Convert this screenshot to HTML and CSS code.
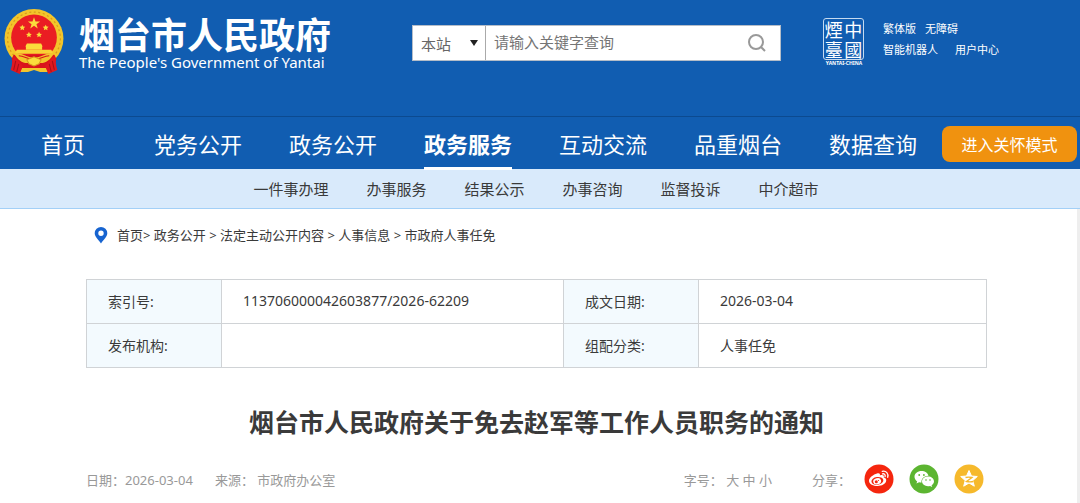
FILE: index.html
```html
<!DOCTYPE html>
<html lang="zh-CN">
<head>
<meta charset="utf-8">
<meta name="viewport" content="width=device-width, initial-scale=1">
<title>烟台市人民政府</title>
<link rel="stylesheet" href="styles.css">
</head>
<body>
<header class="header">
  <a class="brand" href="#">
    <svg class="emblem" viewBox="0 0 58 64" aria-hidden="true">
      <ellipse cx="29" cy="29" rx="29" ry="29" fill="#f3c52b"/>
      <circle cx="29" cy="29" r="26" fill="none" stroke="#d99a1c" stroke-width="1.200" stroke-dasharray="2 2.500"/>
      <circle cx="29" cy="28" r="22.500" fill="#ea1d23"/>
      <path d="M29 8l1.500 4.200h4.500l-3.600 2.700 1.300 4.300-3.700-2.600-3.700 2.600 1.300-4.300-3.600-2.700h4.500z" fill="#fbdc3c"/>
      <g fill="#fbdc3c">
        <path id="star" d="M17.500 15.500l.9 1.800 2 .2-1.500 1.400.4 2-1.800-1-1.800 1 .4-2-1.500-1.400 2-.2z"/>
        <use href="#star" x="23"/>
        <use href="#star" x="6.500" y="7"/>
        <use href="#star" x="16.500" y="7"/>
      </g>
      <path d="M22 34h14l1.500 3H20.500zM21 37h16v3H21z" fill="#fbdc3c"/>
      <path d="M12 40h34l2 4H10z" fill="#f9d235"/>
      <path d="M9 45h40l2 4-3 12-8 1-3-4H21l-3 4-8-1-3-12z" fill="#d9141c"/>
      <path d="M9 43c8 0 14 5 20 5s12-5 20-5c-4 8-10 11-15 10l-5-3-5 3c-5 1-11-2-15-10z" fill="#f3c52b"/>
      <path d="M14 46c5 0 10 4 15 4s10-4 15-4" fill="none" stroke="#d9141c"/>
      <path d="M22 50l7-3 7 3-2 4-5 2-5-2z" fill="#fbdc3c" stroke="#d99a1c"/>
      <path d="M17 58h24l2 4h-8l-6-2-6 2h-8z" fill="#f3c52b"/>
      <path d="M9 46c-2 5-1 9-3 14l9 4 3-8zM49 46c2 5 1 9 3 14l-9 4-3-8z" fill="#e0181f"/>
      <path d="M11 51l-2 9M14 54l-2 8M47 51l2 9M44 54l2 8" stroke="#a60f18"/>
    </svg>
    <span class="brand-text">
      <strong class="brand-name">烟台市人民政府</strong>
      <span class="brand-en" lang="en">The People's Government of Yantai</span>
    </span>
  </a>
  <form class="search" role="search">
    <select class="search-scope" aria-label="搜索范围"><option>本站</option></select>
    <input class="search-input" type="text" placeholder="请输入关键字查询" aria-label="关键字">
    <button class="search-button" type="button" aria-label="搜索">
      <svg viewBox="0 0 20 20" aria-hidden="true"><circle cx="9" cy="9" r="7"/><path d="M14 14l4 4"/></svg>
    </button>
  </form>
  <div class="seal">
    <div class="seal-box" lang="zh-TW"><span>煙</span><span>中</span><span>臺</span><span>國</span></div>
    <svg class="seal-caption" viewBox="0 0 38 6"><text x="19" y="5" text-anchor="middle">YANTAI-CHINA</text></svg>
  </div>
  <div class="tools">
    <div class="tools-row"><a href="#">繁体版</a><a href="#">无障碍</a></div>
    <div class="tools-row tools-row-wide"><a href="#">智能机器人</a><a href="#">用户中心</a></div>
  </div>
</header>
<nav class="nav" aria-label="主导航">
  <ul class="nav-list">
    <li><a href="#">首页</a></li>
    <li><a href="#">党务公开</a></li>
    <li><a href="#">政务公开</a></li>
    <li><a class="active" href="#">政务服务</a></li>
    <li><a href="#">互动交流</a></li>
    <li><a href="#">品重烟台</a></li>
    <li><a href="#">数据查询</a></li>
  </ul>
  <button class="care" type="button">进入关怀模式</button>
</nav>
<nav class="subnav" aria-label="政务服务">
  <a href="#">一件事办理</a>
  <a href="#">办事服务</a>
  <a href="#">结果公示</a>
  <a href="#">办事咨询</a>
  <a href="#">监督投诉</a>
  <a href="#">中介超市</a>
</nav>
<main class="main">
  <div class="crumbs">
    <svg class="pin" viewBox="0 0 14 18" aria-hidden="true"><path fill-rule="evenodd" d="M7 1a6.300 6.300 0 0 0-6.300 6.300C.7 11 4.500 13.500 7 17.500c2.500-4 6.300-6.500 6.300-10.200A6.300 6.300 0 0 0 7 1zm0 3.600a2.700 2.700 0 1 1 0 5.400 2.700 2.700 0 0 1 0-5.400z"/></svg>
    <span><a href="#">首页</a>&gt; <a href="#">政务公开</a> &gt; <a href="#">法定主动公开内容</a> &gt; <a href="#">人事信息</a> &gt; <a href="#">市政府人事任免</a></span>
  </div>
  <table class="info">
    <colgroup><col class="col-label"><col class="col-wide"><col class="col-label"><col></colgroup>
    <tr><th scope="row">索引号:</th><td>113706000042603877/2026-62209</td><th scope="row">成文日期:</th><td>2026-03-04</td></tr>
    <tr><th scope="row">发布机构:</th><td></td><th scope="row">组配分类:</th><td>人事任免</td></tr>
  </table>
  <h1 class="title">烟台市人民政府关于免去赵军等工作人员职务的通知</h1>
  <div class="meta">
    <span class="meta-date">日期：2026-03-04</span>
    <span class="meta-source">来源： 市政府办公室</span>
    <span class="meta-size">字号： <a href="#">大</a> <a href="#">中</a> <a href="#">小</a></span>
    <span class="meta-share">分享：</span>
    <div class="share">
      <a href="#" aria-label="微博">
        <svg viewBox="0 0 30 30"><circle cx="15" cy="15" r="14.500" fill="#f5260e"/><path fill="#fff" d="M13 9.500c2-.8 3.400 0 2.900 2 2.600-1 4.600-.2 3.900 2 2 .6 2.700 1.800 2.400 3.300-.6 3.200-4.300 5.200-8.500 5.200-4.500 0-8.700-2-8.700-5.300 0-3 4.500-6.200 8-7.200z"/><ellipse cx="13.400" cy="17" rx="6" ry="3.900" fill="#f5260e" transform="rotate(-8 13 17)"/><ellipse cx="13.100" cy="17.200" rx="4" ry="3.100" fill="#fff" transform="rotate(-15 13 17)"/><circle cx="12.300" cy="17.700" r="1.500" fill="#f5260e"/><circle cx="14.500" cy="16.500" r=".6" fill="#f5260e"/><path d="M18.300 7.300c3.800-.8 6.500 2.200 5.400 6M18.500 9.800c1.800-.4 3.100 1 2.600 2.800" fill="none" stroke="#fff" stroke-width="1.300" stroke-linecap="round"/></svg>
      </a>
      <a href="#" aria-label="微信">
        <svg viewBox="0 0 30 30"><circle cx="15" cy="15" r="14.500" fill="#5cb531"/><path fill="#fff" d="M12.500 7c-4 0-7 2.500-7 5.800 0 1.900 1 3.500 2.700 4.600l-.8 2.200 2.700-1.300c.8.200 1.600.3 2.400.3-.6-4 2.700-6.900 7-6.900C18.800 8.900 16 7 12.500 7z"/><path fill="#fff" d="M19 12.400c-3.300 0-6 2.100-6 4.900s2.700 4.900 6 4.900c.7 0 1.400-.1 2-.3l2.200 1.200-.6-1.900c1.500-.9 2.400-2.300 2.400-3.900 0-2.800-2.700-4.900-6-4.900z"/><g fill="#5cb531"><circle cx="10.200" cy="11" r=".9"/><circle cx="14.900" cy="11" r=".9"/><circle cx="17" cy="16" r=".8"/><circle cx="21" cy="16" r=".8"/></g></svg>
      </a>
      <a href="#" aria-label="QQ空间">
        <svg viewBox="0 0 30 30"><circle cx="15" cy="15" r="14.500" fill="#f6b92c"/><path fill="#fff" stroke="#fff" stroke-linejoin="round" d="M15 6.500l2.500 5.500 5.800.5-4.500 4 1.500 5.700-5.300-3.200-5.300 3.200 1.500-5.700-4.500-4 5.800-.5z"/><path d="M11.500 13.500c2-.5 4.500-.5 6.500 0l-5.500 4c2.200.5 4.700.5 7 0" fill="none" stroke="#f6b92c" stroke-width="1.300"/></svg>
      </a>
    </div>
  </div>
</main>
</body>
</html>
```
FILE: styles.css
```css
* { box-sizing: border-box; }
body {
  margin: 0;
  background: #fff;
  color: #3a3a3a;
  font-family: "Noto Sans", "Noto Sans CJK SC", sans-serif;
  font-size: 14px;
}
a { color: inherit; text-decoration: none; }
button, input, select { font: inherit; }
svg { display: block; }

.header {
  display: flex;
  align-items: flex-start;
  height: 116px;
  padding-left: 4px;
  background: #115db1;
  color: #fff;
}
.brand { display: flex; gap: 15px; width: 408px; padding-top: 9px; }
.emblem { width: 60px; height: 65px; }
.brand-text { display: flex; flex-direction: column; padding-top: 6px; }
.brand-name { font-family: "Noto Sans CJK SC", sans-serif; font-size: 36px; line-height: 36px; font-weight: 700; white-space: nowrap; }
.brand-en { font-size: 15px; line-height: 22px; white-space: nowrap; }

.search {
  display: flex;
  flex: 0 1 369px;
  height: 36px;
  margin-top: 25px;
  border: 1px solid #b5bdc8;
  background: #fff;
  font-size: 15px;
}
.search-scope {
  width: 73px;
  padding: 2px 8px 0;
  border: 0;
  border-right: 1px solid #aaa;
  border-radius: 0;
  appearance: none;
  background: url("data:image/svg+xml,%3Csvg xmlns='http://www.w3.org/2000/svg' viewBox='0 0 8 6'%3E%3Cpath d='M0 0h8L4 6z' fill='%23222'/%3E%3C/svg%3E") no-repeat right 7px center / 8px 6px;
  color: #666;
}
.search-input { flex: 1; min-width: 0; padding: 0 8px 2px; border: 0; outline: 0; background: none; }
.search-input::placeholder { color: #757575; }
.search-button { width: 46px; padding: 0 13px; border: 0; background: none; }
.search-button svg { width: 20px; height: 20px; fill: none; stroke: #999; stroke-width: 2; }

.seal { width: 41px; margin: 18px 0 0 42px; }
.seal-box {
  display: grid;
  grid-template-columns: 1fr 1fr;
  border: 1px solid #c5daf0;
  border-radius: 3px;
  font-family: "Noto Sans CJK TC", sans-serif;
  font-size: 18px;
  line-height: 20px;
  text-align: center;
}
.seal-caption { width: 38px; height: 6px; margin: 0 auto; fill: #fff; font-size: 5px; font-weight: 700; }

.tools { margin: 19px 0 0 19px; font-size: 11px; line-height: 20px; }
.tools-row { display: flex; gap: 9px; white-space: nowrap; }
.tools-row-wide { gap: 17px; line-height: 22px; }

.nav {
  display: flex;
  align-items: flex-start;
  gap: 25px;
  height: 53px;
  padding: 0 3px 0 41px;
  border-top: 1px solid #0c4a90;
  background: #115db1;
  color: #fff;
}
.nav-list {
  display: flex;
  flex: 1;
  justify-content: space-between;
  margin: 0;
  padding: 0;
  list-style: none;
  font-size: 22px;
  line-height: 54px;
  white-space: nowrap;
}
.nav-list li:first-child { padding-right: 22px; }
.nav-list a { display: block; height: 53px; }
.nav-list .active { border-bottom: 3px solid #fff; font-weight: 700; }
.care {
  width: 135px;
  height: 36px;
  margin-top: 9px;
  padding: 0;
  border: 0;
  border-radius: 8px;
  background: #f0920f;
  color: #fff;
  font-size: 16px;
}

.subnav {
  display: flex;
  justify-content: center;
  gap: 38px;
  height: 40px;
  padding-right: 8px;
  border-bottom: 1px solid #a3d0f7;
  background: #d9eafb;
  font-size: 15px;
  line-height: 40px;
  white-space: nowrap;
}

.main { min-height: calc(100vh - 209px); padding: 0 90px 0 86px; border-right: 3px solid #eee; }
.crumbs {
  display: flex;
  align-items: center;
  gap: 9px;
  height: 51px;
  padding-left: 8px;
  font-size: 13px;
}
.pin { width: 14px; height: 18px; fill: #1764d0; }

.info { width: 100%; margin-top: 19px; border-collapse: collapse; table-layout: fixed; }
.info th, .info td {
  height: 44px;
  padding: 0 21px 2px;
  border: 1px solid #d0d3d6;
  font-weight: 400;
  text-align: left;
}
.info th { background: #f3fafe; }
.col-label { width: 15%; }
.col-wide { width: 38%; }

.title { margin: 35px 0 0; font-size: 25px; line-height: 38px; font-weight: 700; text-align: center; }
.meta {
  display: flex;
  align-items: center;
  margin-top: 23px;
  color: #999;
  font-size: 13px;
  white-space: nowrap;
}
.meta-source { margin-left: 22px; }
.meta-size { margin-left: auto; }
.meta-share { margin-left: 40px; }
.share { display: flex; gap: 15px; margin: 0 3px 0 13px; }
.share svg { width: 30px; height: 30px; }
```
